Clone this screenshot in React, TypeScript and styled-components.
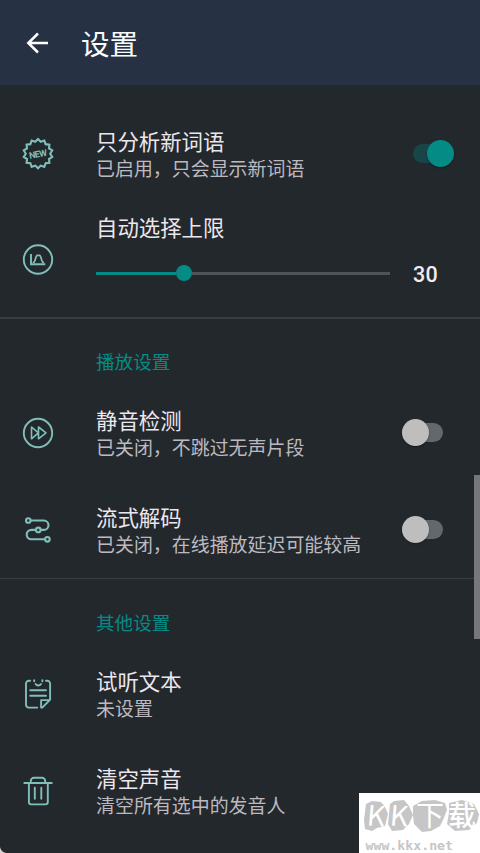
import React, { useState } from 'react';
import styled, { createGlobalStyle } from 'styled-components';

const GlobalStyle = createGlobalStyle`
  * { box-sizing: border-box; }
  body {
    margin: 0;
    background: #23282c;
    font-family: Roboto, "Noto Sans CJK SC", sans-serif;
  }
`;

const Screen = styled.div`
  position: relative;
  display: flex;
  flex-direction: column;
  width: 480px;
  height: 853px;
  overflow: hidden;
  background: #23282c;
`;

const Header = styled.header`
  display: flex;
  align-items: center;
  gap: 31px;
  height: 85px;
  flex: none;
  padding: 0 24px 0 25px;
  background: #263244;
`;

const BackButton = styled.button`
  display: flex;
  width: 25px;
  height: 24px;
  padding: 0;
  border: 0;
  background: none;
`;

const Title = styled.h1`
  margin: 1px 0 0;
  color: #fafbfc;
  font: 400 28.5px/40px "Noto Sans CJK SC", sans-serif;
`;

const Group = styled.section<{ $first?: boolean }>`
  flex: none;
  padding-top: ${p => (p.$first ? 20 : 0)}px;
  border-bottom: ${p => (p.$first ? '2px' : '1px')} solid #393d41;
  &:last-of-type { border-bottom: 0; }
`;

const GroupTitle = styled.h2<{ $height?: number }>`
  height: ${p => p.$height ?? 65}px;
  margin: 0;
  padding: ${p => (p.$height ?? 65) - 48}px 0 0 96px;
  color: #058b85;
  font: 400 18.6px/50px "Noto Sans CJK SC", sans-serif;
`;

const Row = styled.div<{ $height?: number }>`
  display: grid;
  grid-template-columns: 96px 1fr 94px;
  align-items: center;
  height: ${p => p.$height ?? 97}px;
`;

const IconCell = styled.div`
  display: flex;
  padding-left: 20px;
  svg { display: block; }
`;

const TextBlock = styled.div`
  padding-bottom: 2px;
`;

const Label = styled.div`
  color: #ece7ee;
  font: 400 21.4px/29px "Noto Sans CJK SC", sans-serif;
  white-space: nowrap;
`;

const Summary = styled.div`
  color: #bdb9c0;
  font: 400 18.95px/25px "Noto Sans CJK SC", sans-serif;
  white-space: nowrap;
`;

const SwitchTrack = styled.button<{ $on: boolean }>`
  display: flex;
  align-items: center;
  justify-content: ${p => (p.$on ? 'flex-end' : 'flex-start')};
  width: 41px;
  height: 19px;
  margin-left: ${p => (p.$on ? 27 : 16)}px;
  padding: 0;
  border: 0;
  border-radius: 10px;
  background: ${p => (p.$on ? '#184548' : '#64686c')};
`;

const SwitchThumb = styled.span<{ $on: boolean }>`
  flex: none;
  width: 27px;
  height: 27px;
  border-radius: 50%;
  background: ${p => (p.$on ? '#058b85' : '#bebebe')};
  box-shadow: 0 1px 2px rgba(0, 0, 0, 0.35);
`;

const SliderBody = styled.div`
  display: flex;
  flex-direction: column;
  gap: 24px;
  padding-bottom: 26px;
`;

const SliderLine = styled.div`
  display: flex;
  align-items: center;
  width: 294px;
  height: 16px;
`;

const SliderFill = styled.span`
  height: 3px;
  background: #058b85;
`;

const SliderKnob = styled.span`
  width: 16px;
  height: 16px;
  border-radius: 50%;
  background: #058b85;
`;

const SliderRest = styled.span`
  flex: 1;
  height: 3px;
  background: #505458;
`;

const SliderValue = styled.div`
  padding: 30px 0 0 23px;
  color: #f0ecf1;
  font: 500 21.5px/26px Roboto, sans-serif;
  letter-spacing: 0.3px;
`;

const ScrollThumb = styled.div`
  position: absolute;
  top: 475px;
  right: 0;
  width: 6px;
  height: 164px;
  background: #77767c;
`;

const Corner = styled.svg`
  position: absolute;
  left: 0;
  bottom: 0;
`;

const Watermark = styled.div`
  position: absolute;
  right: 0;
  bottom: 0;
  width: 121px;
  height: 60px;
  background: #fff;
  svg { display: block; overflow: visible; }
`;

function Icon({ children }: { children: React.ReactNode }) {
  return (
    <svg width="36" height="36" viewBox="0 0 36 36" fill="none" stroke="#80bfb9"
      strokeWidth="1.9" strokeLinecap="round" strokeLinejoin="round">
      {children}
    </svg>
  );
}

const badgePoints = Array.from({ length: 28 }, (_, i) => {
  const angle = (i * Math.PI) / 14 - Math.PI / 2 + Math.PI / 14;
  const r = i % 2 ? 14.6 : 12.2;
  return `${(18 + r * Math.cos(angle)).toFixed(2)},${(17.7 + r * Math.sin(angle)).toFixed(2)}`;
}).join(' ');

const NewIcon = () => (
  <Icon>
    <polygon points={badgePoints} strokeWidth="2.1" strokeLinejoin="miter" />
    <text x="18" y="21.2" textAnchor="middle" fill="#80bfb9" stroke="none" fontFamily="Roboto"
      fontWeight="700" fontSize="9" textLength="18" transform="rotate(-10 18 18)">NEW</text>
  </Icon>
);

const ChartIcon = () => (
  <Icon>
    <circle cx="18" cy="17.5" r="14.2" />
    <path d="M11 12v10.2h14.3" strokeLinecap="butt" strokeLinejoin="miter" />
    <path d="M13.4 20.400c2.400 0 1.800-7 4-7h2c2.200 0 1.600 7 4 7" strokeWidth="1.7" />
  </Icon>
);

const ForwardIcon = () => (
  <Icon>
    <circle cx="18" cy="18" r="14.2" />
    <path d="M11.5 12v11.8l6.900-5.900zM18.500 12v11.800l7.500-5.900z" strokeWidth="1.6" />
  </Icon>
);

const RouteIcon = () => (
  <Icon>
    <g strokeWidth="2.1">
      <circle cx="8.3" cy="8.5" r="2.3" />
      <circle cx="18.3" cy="17.9" r="2.3" />
      <circle cx="27.4" cy="27.3" r="2.3" />
      <path d="M10.8 8.5h13a4.700 4.700 0 0 1 0 9.400h-3.200M15.900 17.900h-4.500a4.700 4.700 0 0 0 0 9.400h13.500" />
    </g>
  </Icon>
);

const NoteIcon = () => (
  <Icon>
    <path d="M10.200 4.800H8.800A2.800 2.800 0 0 0 6 7.600v21.200a2.800 2.800 0 0 0 2.800 2.800h8.500M26 4.800h1.300a2.800 2.800 0 0 1 2.800 2.800v16l-7.800 8h-1.200v-7.500h8.700" />
    <path d="M14.200 4.300v.9M22.400 4.300v.9M15.600 8c1.300 2 4.100 2 5.400 0" />
    <path d="M10.200 14.300h15.800M10.200 19.700h15.800" />
  </Icon>
);

const TrashIcon = () => (
  <Icon>
    <path d="M4.300 10h27.500M10.800 9.500V8a3.200 3.200 0 0 1 3.200-3.200h8a3.200 3.200 0 0 1 3.200 3.200v1.500M8.900 10.500v18.600a2.300 2.300 0 0 0 2.300 2.300h14.300a2.300 2.300 0 0 0 2.300-2.300V10.500M14.800 14.800v11M21.300 14.800v11" />
  </Icon>
);

interface SettingProps {
  icon: React.ReactNode;
  label: string;
  summary: string;
  initial?: boolean;
}

function Setting({ icon, label, summary, initial }: SettingProps) {
  const [on, setOn] = useState(initial);
  return (
    <Row>
      <IconCell>{icon}</IconCell>
      <TextBlock>
        <Label>{label}</Label>
        <Summary>{summary}</Summary>
      </TextBlock>
      {on !== undefined && (
        <SwitchTrack $on={on} role="switch" aria-checked={on} aria-label={label} onClick={() => setOn(!on)}>
          <SwitchThumb $on={on} />
        </SwitchTrack>
      )}
    </Row>
  );
}

function SliderSetting({ value, max }: { value: number; max: number }) {
  return (
    <Row $height={115}>
      <IconCell><ChartIcon /></IconCell>
      <SliderBody>
        <Label>自动选择上限</Label>
        <SliderLine>
          <SliderFill style={{ width: `${((value / max) * 294 - 8).toFixed(1)}px` }} />
          <SliderKnob />
          <SliderRest />
        </SliderLine>
      </SliderBody>
      <SliderValue>{value}</SliderValue>
    </Row>
  );
}

const SiteMark = () => (
  <Watermark>
    <svg width="121" height="60" viewBox="0 0 121 60">
      <g fill="#c6c6c6">
        <path d="M7 11l6-3 9 1 4 5 3 7-3 12-8 2-5 3-7-2-1-9z" />
        <path d="M31 11l4-3 10-1 5 6 4 9-4 9-6 6-11 1-4-7z" />
        <path d="M54 13l9-5 13-1 10 3 2 7-4 10-3 6-9 5-9 1-8-8-1-9z" />
        <path d="M90 10l13-3 12 4 5 10-2 9-8 7-14 1-8-7 2-11z" />
      </g>
      <g fill="#fff" fontFamily='"Noto Sans CJK SC", sans-serif' fontWeight="400">
        <text x="8" y="33" fontSize="28" transform="rotate(5 17 23)">K</text>
        <text x="31" y="33" fontSize="28" transform="rotate(5 40 23)">K</text>
        <text x="57" y="33" fontSize="28">下</text>
        <text x="89" y="33" fontSize="28" fontWeight="500">载</text>
      </g>
      <text x="6.5" y="57" fill="#c6c6c6" fontFamily='"DejaVu Sans Mono", monospace' fontWeight="700"
        fontSize="13" textLength="87.5" lengthAdjust="spacingAndGlyphs">www.kkx.net</text>
    </svg>
  </Watermark>
);

export default function App() {
  return (
    <Screen>
      <GlobalStyle />
      <Header>
        <BackButton aria-label="返回">
          <svg width="25" height="24" viewBox="0 0 25 24" fill="none" stroke="#fff" strokeWidth="2.5">
            <path d="M23 12H3M13 2.5L3.300 12l9.700 9.500" />
          </svg>
        </BackButton>
        <Title>设置</Title>
      </Header>
      <Group $first>
        <Setting icon={<NewIcon />} label="只分析新词语" summary="已启用，只会显示新词语" initial />
        <SliderSetting value={30} max={100} />
      </Group>
      <Group>
        <GroupTitle>播放设置</GroupTitle>
        <Setting icon={<ForwardIcon />} label="静音检测" summary="已关闭，不跳过无声片段" initial={false} />
        <Setting icon={<RouteIcon />} label="流式解码" summary="已关闭，在线播放延迟可能较高" initial={false} />
      </Group>
      <Group>
        <GroupTitle $height={66}>其他设置</GroupTitle>
        <Setting icon={<NoteIcon />} label="试听文本" summary="未设置" />
        <Setting icon={<TrashIcon />} label="清空声音" summary="清空所有选中的发音人" />
      </Group>
      <ScrollThumb />
      <Corner width="6" height="6" viewBox="0 0 6 6"><path d="M0 0Q1 5 6 6H0z" fill="#d5d6d7" /></Corner>
      <SiteMark />
    </Screen>
  );
}
